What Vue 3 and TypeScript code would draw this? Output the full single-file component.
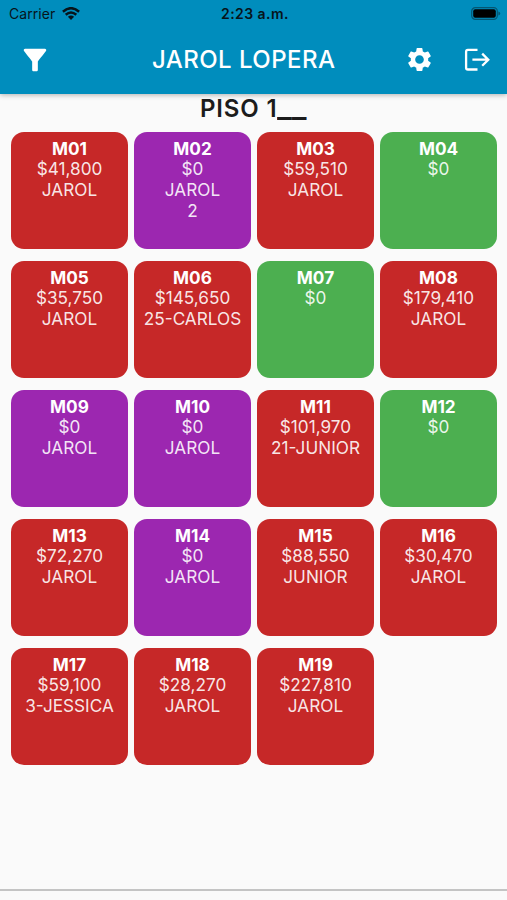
<script setup lang="ts">
type Status = 'busy' | 'billed' | 'free'

interface TableCard {
  name: string
  total: string
  lines: string[]
  status: Status
}

const table = (name: string, total: string, status: Status, ...lines: string[]): TableCard => ({
  name,
  total,
  lines,
  status,
})

const tables: TableCard[] = [
  table('M01', '$41,800', 'busy', 'JAROL'),
  table('M02', '$0', 'billed', 'JAROL', '2'),
  table('M03', '$59,510', 'busy', 'JAROL'),
  table('M04', '$0', 'free'),
  table('M05', '$35,750', 'busy', 'JAROL'),
  table('M06', '$145,650', 'busy', '25-CARLOS'),
  table('M07', '$0', 'free'),
  table('M08', '$179,410', 'busy', 'JAROL'),
  table('M09', '$0', 'billed', 'JAROL'),
  table('M10', '$0', 'billed', 'JAROL'),
  table('M11', '$101,970', 'busy', '21-JUNIOR'),
  table('M12', '$0', 'free'),
  table('M13', '$72,270', 'busy', 'JAROL'),
  table('M14', '$0', 'billed', 'JAROL'),
  table('M15', '$88,550', 'busy', 'JUNIOR'),
  table('M16', '$30,470', 'busy', 'JAROL'),
  table('M17', '$59,100', 'busy', '3-JESSICA'),
  table('M18', '$28,270', 'busy', 'JAROL'),
  table('M19', '$227,810', 'busy', 'JAROL'),
]
</script>

<template>
  <div class="screen">
    <header class="top">
      <div class="status-bar">
        <div class="carrier">
          <span>Carrier</span>
          <svg class="wifi" viewBox="0 0 18 13" aria-hidden="true">
            <g fill="none" stroke="#07141b" stroke-width="2.5">
              <path d="M0.9 4.7Q9 -2.3 17.1 4.7" />
              <path d="M3.7 7.8Q9 3.3 14.3 7.8" />
            </g>
            <path d="M5.9 9.7Q9 7.2 12.1 9.7L9 12.9Z" fill="#07141b" />
          </svg>
        </div>
        <span class="clock">2:23 a.m.</span>
        <svg class="battery" viewBox="0 0 30 13" aria-hidden="true">
          <rect x="0.7" y="0.7" width="25.6" height="11.6" rx="3.6" fill="none" stroke="#045672" stroke-width="1.2" />
          <rect x="2.2" y="2.2" width="22.6" height="8.6" rx="2" fill="#000" />
          <path d="M27.4 4.4Q29.2 5 29.2 6.5T27.4 8.6Z" fill="#045672" />
        </svg>
      </div>
      <div class="app-bar">
        <button class="action" type="button" aria-label="Filtrar">
          <svg class="filter" viewBox="0 0 24 24" fill="#fff">
            <path d="M4.25 5.61C6.27 8.2 10 13 10 13v6c0 .55.45 1 1 1h2c.55 0 1-.45 1-1v-6s3.72-4.8 5.74-7.39A1 1 0 0 0 18.95 4H5.04c-.83 0-1.3.95-.79 1.61z" />
          </svg>
        </button>
        <h1 class="title">JAROL LOPERA</h1>
        <div class="actions">
          <button class="action" type="button" aria-label="Ajustes">
            <svg class="gear" viewBox="0 0 24 24" fill="#fff">
              <path d="M19.14 12.94c.04-.3.06-.61.06-.94 0-.32-.02-.64-.07-.94l2.03-1.58a.49.49 0 0 0 .12-.61l-1.92-3.32a.488.488 0 0 0-.59-.22l-2.39.96c-.5-.38-1.03-.7-1.62-.94l-.36-2.54a.484.484 0 0 0-.48-.41h-3.84c-.24 0-.43.17-.47.41l-.36 2.54c-.59.24-1.13.57-1.62.94l-2.39-.96c-.22-.08-.47 0-.59.22L2.74 8.87c-.12.21-.08.47.12.61l2.03 1.58c-.05.3-.09.63-.09.94s.02.64.07.94l-2.03 1.58a.49.49 0 0 0-.12.61l1.92 3.32c.12.22.37.29.59.22l2.39-.96c.5.38 1.03.7 1.62.94l.36 2.54c.05.24.24.41.48.41h3.84c.24 0 .44-.17.47-.41l.36-2.54c.59-.24 1.13-.56 1.62-.94l2.39.96c.22.08.47 0 .59-.22l1.92-3.32c.12-.22.07-.47-.12-.61l-2.01-1.58zM12 15.6c-1.98 0-3.6-1.62-3.6-3.6s1.62-3.6 3.6-3.6 3.6 1.62 3.6 3.6-1.62 3.6-3.6 3.6z" />
            </svg>
          </button>
          <button class="action" type="button" aria-label="Salir">
            <svg class="exit" viewBox="0 0 26 24" fill="none" stroke="#fff" stroke-width="2.3">
              <path d="M13.5 1.9H3.9Q2.1 1.9 2.1 3.7V19.7Q2.1 21.5 3.9 21.5H13.5" />
              <path d="M8.4 11.7H24.2M18.2 5.6L24.3 11.7L18.2 17.8" />
            </svg>
          </button>
        </div>
      </div>
    </header>

    <main class="content">
      <h2 class="floor">PISO 1<span class="blank">__</span></h2>
      <div class="grid">
        <article v-for="t in tables" :key="t.name" class="card" :class="t.status">
          <strong>{{ t.name }}</strong>
          <span>{{ t.total }}</span>
          <span v-for="line in t.lines" :key="line">{{ line }}</span>
        </article>
      </div>
    </main>
    <footer class="bottom"></footer>
  </div>
</template>

<style>
body {
  background: #fafafa;
}
</style>

<style scoped>
.screen {
  display: flex;
  flex-direction: column;
  height: 900px;
  overflow: hidden;
  background: #fafafa;
  font-family: Inter, 'Liberation Sans', sans-serif;
}

.top {
  flex: none;
  height: 94px;
  background: #008dbd;
  box-shadow: 0 1px 5px rgba(0, 0, 0, 0.3);
}

.status-bar {
  display: grid;
  grid-template-columns: 1fr auto 1fr;
  align-items: center;
  height: 27px;
  padding: 0 6px 0 9px;
  color: #07141b;
  font-size: 14px;
}

.carrier {
  display: flex;
  align-items: center;
  gap: 7px;
  letter-spacing: 0.05px;
}

.wifi {
  width: 18px;
  height: 13px;
}

.clock {
  font-weight: 600;
  letter-spacing: 0.45px;
}

.battery {
  width: 30px;
  height: 13px;
  justify-self: end;
}

.app-bar {
  display: grid;
  grid-template-columns: 134px auto 1fr;
  align-items: center;
  height: 66px;
  padding: 0 17px 0 18px;
}

.action {
  display: flex;
  padding: 0;
  border: 0;
  background: none;
}

.actions {
  display: flex;
  align-items: center;
  justify-content: flex-end;
  gap: 30px;
}

.filter {
  width: 34px;
  height: 34px;
}

.gear {
  width: 29px;
  height: 29px;
  margin-bottom: 1px;
}

.exit {
  width: 26px;
  height: 24px;
}

.title {
  margin: 0;
  color: #fff;
  font-size: 24px;
  font-weight: 500;
  line-height: 30px;
  letter-spacing: 0.45px;
}

.content {
  flex: 1;
}

.floor {
  margin: 0;
  height: 38px;
  color: #1c1c1c;
  font-size: 24px;
  font-weight: 600;
  line-height: 30px;
  letter-spacing: 0.85px;
  text-align: center;
}

.blank {
  display: inline-block;
  margin-right: 7px;
  letter-spacing: 0;
  transform: scale(1.31, 1.25);
  transform-origin: left 76%;
}

.grid {
  display: grid;
  grid-template-columns: repeat(4, 1fr);
  grid-auto-rows: 117px;
  gap: 12px 6px;
  padding: 0 10px 0 11px;
}

.card {
  display: flex;
  flex-direction: column;
  align-items: center;
  padding-top: 6.5px;
  border-radius: 13px;
  color: rgba(255, 255, 255, 0.9);
  font-size: 17.2px;
  line-height: 20.8px;
  white-space: nowrap;
}

.card strong {
  color: #fff;
  font-weight: 700;
}

.busy {
  background: #c62828;
}

.billed {
  background: #9c27b0;
}

.free {
  background: #4caf50;
}

.bottom {
  flex: none;
  height: 9px;
  border-top: 2px solid #c4c4c4;
}
</style>
